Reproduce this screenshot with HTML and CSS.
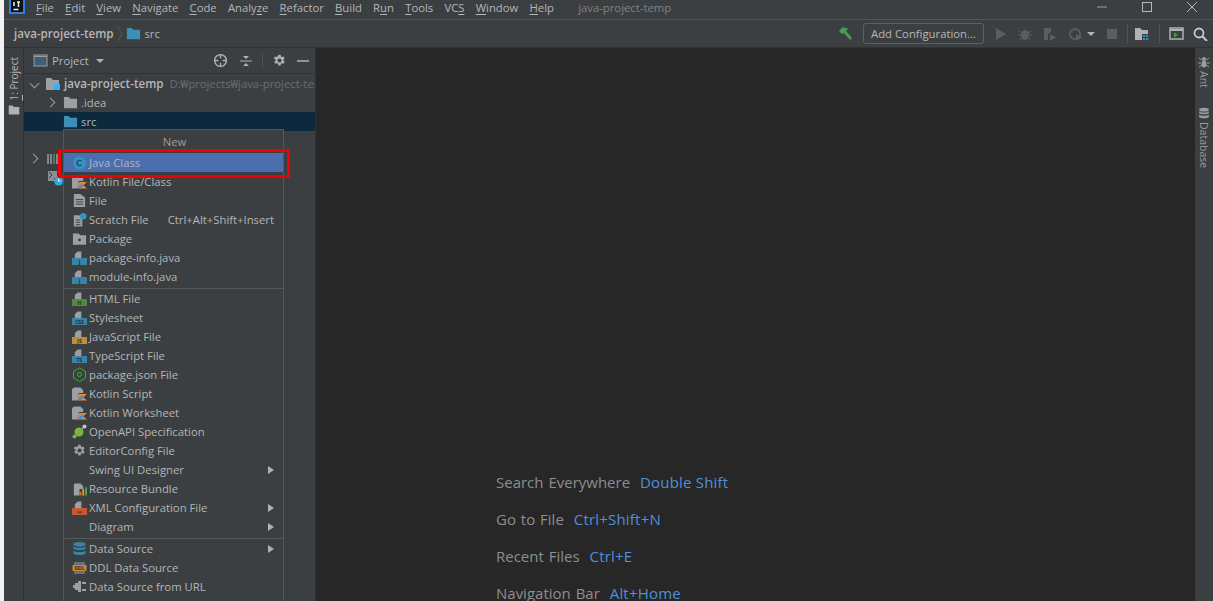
FILE: index.html
```html
<!DOCTYPE html>
<html lang="en">

<head>
    <meta charset="UTF-8">
    <meta name="viewport" content="width=device-width, initial-scale=1.0">
    <title>java-project-temp</title>
    <link rel="stylesheet" href="styles.css">
</head>

<body>
    <svg class="sprite" width="0" height="0">
        <symbol id="folder" viewBox="0 0 16 16"><path d="M1 2h5l2 2h7v10H1z" /></symbol>
        <symbol id="filebase" viewBox="0 0 16 16"><path d="M6 1h4v7H3V4z" fill="#9aa0a5" /></symbol>
        <symbol id="textfile" viewBox="0 0 16 16"><path d="M2 1h7l5 4v10H2z" fill="#9aa0a5" /><path d="M4 7h8M4 9.500h8M4 12h8" stroke="#3c3f41" /></symbol>
        <symbol id="kotlin" viewBox="0 0 16 16"><path d="M2 1h7l3 3v3H7v8H0V3z" fill="#9aa0a5" /><path d="M7 8h9l-4 3.500L16 15H7z" fill="#f0882f" /><path d="M7 13l4-4 1 3-3 3H7z" fill="#3a8ee6" /></symbol>
        <symbol id="gear" viewBox="0 0 16 16"><path d="M6.600 1h2.800l.4 2 1.200.7 2-.7 1.400 2.400-1.600 1.400v1.400l1.600 1.400-1.400 2.400-2-.7-1.200.7-.4 2H6.600l-.4-2-1.200-.7-2 .7-1.400-2.400 1.600-1.400V6.800L1 5.400l1.400-2.400 2 .7 1.200-.7zM8 5.500a2.500 2.500 0 1 0 0 5 2.500 2.500 0 0 0 0-5z" fill-rule="evenodd" /></symbol>
        <symbol id="db" viewBox="0 0 16 16"><ellipse cx="8" cy="3.500" rx="6.500" ry="2.500" /><path d="M1.500 5.500c1 2.400 12 2.400 13 0v2.500c-1 2.400-12 2.400-13 0zM1.500 10c1 2.400 12 2.400 13 0v3c-1 2.700-12 2.700-13 0z" /></symbol>
    </svg>

    <div class="window">
        <div class="menubar">
            <svg class="appLogo" width="16" height="16" viewBox="0 0 16 16"><rect x="1" y="-1" width="14" height="14" fill="#111" stroke="#2f7fe0" stroke-width="2" /><path d="M5 2v4M8 2h3M9.500 2v5M4.500 9.500h5" stroke="#eee" stroke-width="1.500" /></svg>
            <span class="menuItem"><u>F</u>ile</span>
            <span class="menuItem"><u>E</u>dit</span>
            <span class="menuItem"><u>V</u>iew</span>
            <span class="menuItem"><u>N</u>avigate</span>
            <span class="menuItem"><u>C</u>ode</span>
            <span class="menuItem">Analy<u>z</u>e</span>
            <span class="menuItem"><u>R</u>efactor</span>
            <span class="menuItem"><u>B</u>uild</span>
            <span class="menuItem">R<u>u</u>n</span>
            <span class="menuItem"><u>T</u>ools</span>
            <span class="menuItem">VC<u>S</u></span>
            <span class="menuItem"><u>W</u>indow</span>
            <span class="menuItem"><u>H</u>elp</span>
            <span class="menuTitle">java-project-temp</span>
            <div class="winBtns">
                <svg width="12" height="12" viewBox="0 0 12 12"><path d="M1 6h10" stroke="#9a9c9e" /></svg>
                <svg width="12" height="12" viewBox="0 0 12 12"><rect x="1.500" y="1.500" width="9" height="9" fill="none" stroke="#b4b6b8" /></svg>
                <svg width="12" height="12" viewBox="0 0 12 12"><path d="M1 1l10 10M11 1L1 11" stroke="#b4b6b8" /></svg>
            </div>
        </div>

        <div class="navbar">
            <span class="crumb">java-project-temp</span>
            <svg class="crumbSep" width="8" height="18" viewBox="0 0 8 18"><path d="M1 1l5 8-5 8" fill="none" stroke="#55585a" /></svg>
            <svg class="blueFolder" width="15" height="15"><use href="#folder" /></svg>
            <span class="crumbSmall">src</span>
            <div class="toolbar">
                <svg class="hammer" width="16" height="16" viewBox="0 0 16 16"><path d="M1 5l4-4 2 1 3 0-1 2-1 1 6 7-2 2-6-7-2 1z" fill="#499c54" /></svg>
                <div class="addConfig">Add Configuration...</div>
                <svg class="runGap" width="14" height="14" viewBox="0 0 14 14"><path d="M2 1l10 6-10 6z" fill="#5b5e60" /></svg>
                <svg class="runGap" width="14" height="14" viewBox="0 0 14 14"><ellipse cx="7" cy="8" rx="4" ry="5" fill="#5b5e60" /><path d="M1 4l3 2M13 4l-3 2M0 8h3M14 8h-3M1 13l3-2M13 13l-3-2" stroke="#5b5e60" /></svg>
                <svg class="runGap" width="16" height="14" viewBox="0 0 16 14"><path d="M2 1h7v4L6 7v6H2z" fill="#5b5e60" /><path d="M8 7l6 3.500-6 3.500z" fill="#5b5e60" /></svg>
                <svg class="runGap" width="16" height="14" viewBox="0 0 16 14"><circle cx="7" cy="7" r="5" fill="none" stroke="#5b5e60" stroke-width="2" /><path d="M8 7l6 3.500-6 3.500z" fill="#5b5e60" /></svg>
                <span class="caret caretRun"></span>
                <svg class="stopIcon" width="12" height="12" viewBox="0 0 12 12"><rect x="1" y="1" width="10" height="10" fill="#5b5e60" /></svg>
                <span class="vsep"></span>
                <svg class="structIcon" width="16" height="14" viewBox="0 0 16 14"><path d="M1 1h5l2 2h6v4H8v6H1z" fill="#afb1b3" /><path d="M9 8h2v2H9zM12 8h2v2h-2zM9 11h2v2H9zM12 11h2v2h-2z" fill="#3592c4" /></svg>
                <span class="vsep"></span>
                <svg width="15" height="14" viewBox="0 0 15 14"><rect x="1" y="1" width="13" height="11" fill="none" stroke="#afb1b3" stroke-width="1.500" /><path d="M1 3h13" stroke="#afb1b3" stroke-width="2" /><path d="M5 5.500l4 2.500-4 2.500z" fill="#499c54" /></svg>
                <svg width="15" height="14" viewBox="0 0 15 14"><circle cx="6" cy="6" r="4.500" fill="none" stroke="#c6c8ca" stroke-width="1.800" /><path d="M9 9l5 5" stroke="#c6c8ca" stroke-width="2" /></svg>
            </div>
        </div>

        <div class="workspace">
            <div class="leftStrip">
                <div class="stripTab">
                    <span class="vertText"><u>1</u>: Project</span>
                    <svg width="12" height="12" viewBox="0 0 16 16" fill="#afb1b3"><use href="#folder" /></svg>
                </div>
            </div>

            <div class="projectPanel">
                <div class="panelHead">
                    <svg width="15" height="13" viewBox="0 0 15 13"><rect x="1" y="1" width="13" height="11" fill="#3e5d77" stroke="#9a9c9e" /><path d="M1 2.500h13" stroke="#9a9c9e" /></svg>
                    <span class="panelTitle">Project</span>
                    <span class="caret"></span>
                    <div class="panelTools">
                        <svg width="15" height="15" viewBox="0 0 14 14"><circle cx="7" cy="7" r="5.500" fill="none" stroke="#afb1b3" stroke-width="1.300" /><path d="M7 1v4M7 9v4M1 7h4M9 7h4" stroke="#afb1b3" stroke-width="1.300" /></svg>
                        <svg width="14" height="14" viewBox="0 0 14 14"><path d="M1 7h12" stroke="#afb1b3" /><path d="M4 2h6L7 5zM4 12h6L7 9z" fill="#afb1b3" /></svg>
                        <span class="vsep panelSep"></span>
                        <svg width="13" height="13" fill="#afb1b3"><use href="#gear" /></svg>
                        <svg width="12" height="12" viewBox="0 0 12 12"><path d="M0 6h12" stroke="#afb1b3" stroke-width="1.500" /></svg>
                    </div>
                </div>
                <div class="treeRow treeRoot">
                    <span class="chev open"></span>
                    <svg class="rootIcon" width="16" height="16" viewBox="0 0 16 16"><path d="M1 2h5l2 2h6v10H1z" fill="#9aa0a5" /><rect x="9" y="8" width="6" height="6" fill="#35b3f0" /></svg>
                    <b class="rootName">java-project-temp</b>
                    <span class="rootPath">D:₩projects₩java-project-temp</span>
                </div>
                <div class="treeRow treeChild">
                    <span class="chev"></span>
                    <svg width="15" height="15" class="greyFolder"><use href="#folder" /></svg>
                    <span>.idea</span>
                </div>
                <div class="treeRow treeChild treeSelected">
                    <span class="chev none"></span>
                    <svg width="15" height="15" class="blueFolder"><use href="#folder" /></svg>
                    <span>src</span>
                </div>
                <div class="treeRow"></div>
                <div class="treeRow treeRoot treeLow">
                    <span class="chev"></span>
                    <svg class="rootIcon" width="16" height="14" viewBox="0 0 16 14"><path d="M1 2v10M4 2v10" stroke="#9aa0a5" stroke-width="1.500" /><path d="M7 2v10" stroke="#499c54" stroke-width="1.500" /><path d="M10 2v10M13 2v10" stroke="#9aa0a5" stroke-width="1.500" /></svg>
                </div>
                <div class="treeRow treeRoot treeLow">
                    <span class="chev none"></span>
                    <svg class="rootIcon" width="16" height="16" viewBox="0 0 16 16"><path d="M1 1h9v7H7v3H1z" fill="#8b8f92" /><path d="M2 2l3 3-3 3" fill="none" stroke="#333" /><circle cx="11.500" cy="11" r="4.500" fill="#35a7dc" /><path d="M11.500 8.500V11h2" fill="none" stroke="#fff" /></svg>
                </div>
            </div>

            <div class="editor">
                <div class="hint">Search Everywhere <span class="key">Double Shift</span></div>
                <div class="hint">Go to File <span class="key">Ctrl+Shift+N</span></div>
                <div class="hint">Recent Files <span class="key">Ctrl+E</span></div>
                <div class="hint">Navigation Bar <span class="key">Alt+Home</span></div>
            </div>

            <div class="rightStrip">
                <div class="sideTab">
                    <svg width="12" height="12" viewBox="0 0 12 12"><ellipse cx="6" cy="3" rx="2" ry="2" fill="#9a9c9e" /><ellipse cx="6" cy="8" rx="2.500" ry="3.500" fill="#9a9c9e" /><path d="M1 2l3 2M11 2L8 4M0 7h3M12 7H9M1 11l3-2M11 11L8 9" stroke="#9a9c9e" /></svg>
                    <span class="vertText vertDown">Ant</span>
                </div>
                <div class="sideTab">
                    <svg width="12" height="12" fill="#9a9c9e"><use href="#db" /></svg>
                    <span class="vertText vertDown">Database</span>
                </div>
            </div>
        </div>

        <div class="popup">
            <div class="popupTitle">New</div>
            <div class="popupItem active">
                <svg class="itemIcon" width="14" height="14" viewBox="0 0 14 14"><circle cx="7" cy="7" r="6.500" fill="#3592c4" /><path d="M9 5.200a2.600 2.600 0 1 0 0 3.600" fill="none" stroke="#2b4a62" stroke-width="1.400" /></svg>
                <span>Java Class</span>
            </div>
            <div class="popupItem"><svg class="itemIcon" width="16" height="16"><use href="#kotlin" /></svg><span>Kotlin File/Class</span></div>
            <div class="popupItem"><svg class="itemIcon" width="15" height="15"><use href="#textfile" /></svg><span>File</span></div>
            <div class="popupItem">
                <svg class="itemIcon" width="16" height="16" viewBox="0 0 16 16"><path d="M2 3h6l3 3v9H2z" fill="#9aa0a5" /><path d="M4 8h5M4 10.500h5M4 13h5" stroke="#3c3f41" /><circle cx="12" cy="4" r="3.500" fill="#3592c4" /></svg>
                <span>Scratch File</span><span class="shortcut">Ctrl+Alt+Shift+Insert</span>
            </div>
            <div class="popupItem">
                <svg class="itemIcon" width="15" height="14" viewBox="0 0 16 14"><path d="M1 1h6l2 2h6v10H1z" fill="#9aa0a5" /><circle cx="8" cy="8" r="1.500" fill="#3c3f41" /></svg>
                <span>Package</span>
            </div>
            <div class="popupItem">
                <svg class="itemIcon" width="16" height="16"><use href="#filebase" /><rect x="0" y="8" width="15" height="7" fill="#3a83a8" /><text class="badge" x="7.500" y="14">J</text></svg>
                <span>package-info.java</span>
            </div>
            <div class="popupItem">
                <svg class="itemIcon" width="16" height="16"><use href="#filebase" /><rect x="0" y="8" width="15" height="7" fill="#3a83a8" /><text class="badge" x="7.500" y="14">J</text></svg>
                <span>module-info.java</span>
            </div>
            <div class="popupSep"></div>
            <div class="popupItem">
                <svg class="itemIcon" width="16" height="16"><use href="#filebase" /><rect x="0" y="8" width="15" height="7" fill="#4f8a3f" /><text class="badge" x="7.500" y="14">H</text></svg>
                <span>HTML File</span>
            </div>
            <div class="popupItem">
                <svg class="itemIcon" width="16" height="16"><use href="#filebase" /><rect x="0" y="8" width="15" height="7" fill="#3a83a8" /><text class="badge" x="7.500" y="14">CSS</text></svg>
                <span>Stylesheet</span>
            </div>
            <div class="popupItem">
                <svg class="itemIcon" width="16" height="16"><use href="#filebase" /><rect x="0" y="8" width="15" height="7" fill="#c08c35" /><text class="badge" x="7.500" y="14">JS</text></svg>
                <span>JavaScript File</span>
            </div>
            <div class="popupItem">
                <svg class="itemIcon" width="16" height="16"><use href="#filebase" /><rect x="0" y="8" width="15" height="7" fill="#3a83a8" /><text class="badge" x="7.500" y="14">TS</text></svg>
                <span>TypeScript File</span>
            </div>
            <div class="popupItem">
                <svg class="itemIcon" width="14" height="15" viewBox="0 0 14 15"><path d="M7 1l6 3.500v6.500l-6 3.500-6-3.500V4.500z" fill="#2d4a32" stroke="#5d9b47" /><circle cx="7" cy="7.500" r="2" fill="none" stroke="#5d9b47" /></svg>
                <span>package.json File</span>
            </div>
            <div class="popupItem"><svg class="itemIcon" width="16" height="16"><use href="#kotlin" /></svg><span>Kotlin Script</span></div>
            <div class="popupItem"><svg class="itemIcon" width="16" height="16"><use href="#kotlin" /></svg><span>Kotlin Worksheet</span></div>
            <div class="popupItem">
                <svg class="itemIcon" width="15" height="15" viewBox="0 0 15 15"><path d="M3 12L12 3" stroke="#9aa0a5" stroke-width="1.500" /><circle cx="7" cy="8" r="4.500" fill="#7cb342" /><circle cx="12.500" cy="2.500" r="2" fill="#c4c6c8" /><circle cx="2.500" cy="12.500" r="2" fill="#7cb342" /></svg>
                <span>OpenAPI Specification</span>
            </div>
            <div class="popupItem"><svg class="itemIcon" width="13" height="13" fill="#9aa0a5"><use href="#gear" /></svg><span>EditorConfig File</span></div>
            <div class="popupItem"><span class="noIcon">Swing UI Designer</span><span class="subArrow"></span></div>
            <div class="popupItem">
                <svg class="itemIcon" width="16" height="16" viewBox="0 0 16 16"><path d="M3 2h6l3 3v3H8v7H2V3z" fill="#9aa0a5" /><path d="M8 11h2v4H8z" fill="#d9722b" /><path d="M11 8h2v7h-2z" fill="#c9a13b" /><path d="M14 6h2v9h-2z" fill="#5d9b47" /></svg>
                <span>Resource Bundle</span>
            </div>
            <div class="popupItem">
                <svg class="itemIcon" width="16" height="16"><use href="#filebase" /><rect x="0" y="8" width="15" height="7" fill="#c8592c" /><text class="badge" x="7.500" y="14">&lt;&gt;</text></svg>
                <span>XML Configuration File</span><span class="subArrow"></span>
            </div>
            <div class="popupItem"><span class="noIcon">Diagram</span><span class="subArrow"></span></div>
            <div class="popupSep"></div>
            <div class="popupItem"><svg class="itemIcon" width="15" height="15" fill="#3a83a8"><use href="#db" /></svg><span>Data Source</span><span class="subArrow"></span></div>
            <div class="popupItem">
                <svg class="itemIcon" width="15" height="14" viewBox="0 0 15 14"><path d="M2 1h11v12H2z" fill="#6d7072" /><rect x="0.500" y="4" width="14" height="6" fill="#c08c35" /><text class="badge" x="7.500" y="9">DDL</text></svg>
                <span>DDL Data Source</span>
            </div>
            <div class="popupItem">
                <svg class="itemIcon" width="15" height="13" viewBox="0 0 15 13"><path d="M1 5h2V3h3V1h3v11H6v-2H3V8H1zM10 2h4v2h-4zM10 9h4v2h-4z" fill="#9aa0a5" /></svg>
                <span>Data Source from URL</span>
            </div>
        </div>

        <div class="callout"></div>
    </div>
</body>

</html>
```

FILE: styles.css
```css
* {
    box-sizing: border-box;
}

html,
body {
    margin: 0;
    height: 100%;
    overflow: hidden;
}

body {
    background-color: #f2f2f2;
    font-family: "Open Sans", "Noto Sans", "Noto Sans CJK KR", sans-serif;
    font-size: 11.3px;
    color: #b4b6b8;
}

.sprite {
    position: absolute;
}

svg {
    flex-shrink: 0;
    display: block;
}

u {
    text-underline-offset: 2px;
}

.window {
    position: relative;
    height: 100vh;
    margin-left: 4px;
    background-color: #3c3f41;
    display: flex;
    flex-direction: column;
    overflow: hidden;
}

/* top menu */
.menubar {
    height: 20px;
    flex-shrink: 0;
    display: flex;
    align-items: center;
    padding: 0 0 5px 5px;
    border-bottom: 1px solid #555555;
}

.appLogo {
    margin-right: 11px;
    margin-top: 1px;
}

.menuItem {
    margin-right: 11.200px;
}

.menuTitle {
    margin-left: 13px;
    color: #808386;
}

.winBtns {
    margin-left: auto;
    display: flex;
    gap: 33px;
    padding-right: 15px;
}

/* nav bar */
.navbar {
    height: 28px;
    flex-shrink: 0;
    display: flex;
    align-items: center;
    padding-left: 10px;
    border-bottom: 1px solid #323232;
}

.crumb {
    font-size: 11.600px;
    font-weight: 600;
}

.crumbSep {
    margin: 0 2px 0 3px;
}

.crumbSmall {
    margin-left: 3px;
}

.blueFolder {
    fill: #3d8fb5;
}

.greyFolder {
    fill: #9aa0a5;
}

.toolbar {
    margin-left: auto;
    display: flex;
    align-items: center;
    gap: 9px;
    padding-right: 5px;
}

.addConfig {
    width: 121px;
    height: 21px;
    line-height: 19px;
    text-align: center;
    border: 1px solid #5e6060;
    border-radius: 3px;
}

.runGap {
    margin-left: 1px;
}

.caret {
    width: 0;
    height: 0;
    border-left: 4px solid transparent;
    border-right: 4px solid transparent;
    border-top: 4px solid #afb1b3;
}

.caretRun {
    margin-left: -6px;
}

.stopIcon {
    margin-left: 2px;
}

.structIcon {
    margin-left: -3px;
}

.vsep {
    width: 1px;
    height: 20px;
    background-color: #505254;
}

/* main area */
.workspace {
    flex: 1;
    display: flex;
    min-height: 0;
}

.leftStrip {
    width: 20px;
    flex-shrink: 0;
    background-color: #3c3f41;
    border-right: 1px solid #323232;
}

.stripTab {
    display: flex;
    flex-direction: column;
    align-items: center;
    gap: 3px;
    padding-top: 9px;
}

.vertText {
    writing-mode: vertical-rl;
    transform: rotate(180deg);
    font-size: 10px;
    color: #b4b6b8;
}

.vertDown {
    transform: none;
    font-size: 10.500px;
    color: #9a9c9e;
}

.projectPanel {
    width: 292px;
    flex-shrink: 0;
    overflow: hidden;
    border-right: 1px solid #323232;
}

.panelHead {
    height: 26px;
    display: flex;
    align-items: center;
    padding-left: 9px;
    border-bottom: 1px solid #323232;
}

.panelTitle {
    margin: 0 7px 0 4px;
}

.panelTools {
    margin-left: auto;
    display: flex;
    align-items: center;
    gap: 11px;
    padding-right: 6px;
}

.panelSep {
    height: 14px;
    margin: 0 -1px 0 -2px;
}

.treeRow {
    height: 19px;
    display: flex;
    align-items: center;
    white-space: nowrap;
}

.treeRoot {
    padding-left: 7px;
}

.treeLow {
    padding-left: 6px;
    position: relative;
    top: -1px;
}

.treeLow .rootIcon {
    margin-left: 4px;
}

.treeChild {
    padding-left: 23px;
    gap: 3px;
}

.treeSelected {
    background-color: #0d293e;
}

.chev {
    width: 7px;
    height: 7px;
    flex-shrink: 0;
    margin-right: 6px;
    border-right: 1.500px solid #9a9c9e;
    border-top: 1.500px solid #9a9c9e;
    transform: rotate(45deg);
}

.chev.open {
    transform: rotate(135deg);
}

.chev.none {
    border: 0;
}

.rootIcon {
    margin-right: 3px;
    margin-left: 1px;
}

.rootName {
    font-size: 11.600px;
    font-weight: 600;
}

.rootPath {
    margin-left: 6px;
    color: #6a6d70;
}

/* editor hints */
.editor {
    flex: 1;
    background-color: #272727;
    padding: 422px 0 0 180px;
}

.hint {
    height: 37px;
    line-height: 24px;
    font-size: 15px;
    word-spacing: 1px;
    color: #8c8e90;
    white-space: nowrap;
}

.key {
    margin-left: 5px;
    letter-spacing: .2px;
    word-spacing: 0;
    color: #4f8fdc;
}

.rightStrip {
    width: 18px;
    flex-shrink: 0;
    display: flex;
    flex-direction: column;
    align-items: center;
    gap: 19px;
    padding-top: 8px;
}

.sideTab {
    display: flex;
    flex-direction: column;
    align-items: center;
    gap: 3px;
}

/* popup menu over the tree */
.popup {
    position: absolute;
    left: 59px;
    top: 129px;
    width: 221px;
    height: 500px;
    background-color: #3c3f41;
    border: 1px solid #555759;
}

.popupTitle {
    height: 23px;
    line-height: 23px;
    text-align: center;
    padding-left: 2px;
    color: #9a9c9e;
}

.popupItem {
    height: 19px;
    display: flex;
    align-items: center;
    padding-left: 8px;
    white-space: nowrap;
}

.popupItem.active {
    background-color: #4b6eaf;
}

.itemIcon {
    width: 15px;
    margin-right: 2px;
}

.badge {
    font-size: 5px;
    font-weight: 700;
    text-anchor: middle;
    fill: #2b2b2b;
}

.noIcon {
    padding-left: 17px;
}

.shortcut {
    margin-left: auto;
    padding-right: 9px;
}

.subArrow {
    margin-left: auto;
    margin-right: 9px;
    width: 0;
    height: 0;
    border-top: 4px solid transparent;
    border-bottom: 4px solid transparent;
    border-left: 6px solid #afb1b3;
}

.popupSep {
    height: 3px;
    border-bottom: 1px solid #555759;
}

.callout {
    position: absolute;
    left: 54px;
    top: 149px;
    width: 232px;
    height: 29px;
    border: 3px solid #f00000;
}
```
